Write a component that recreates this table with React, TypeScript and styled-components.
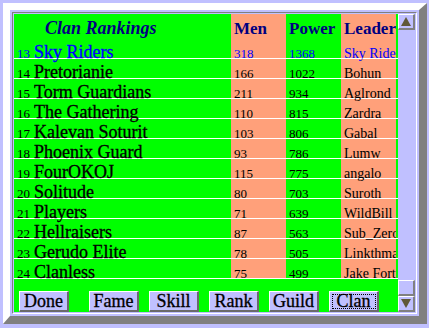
import styled, { createGlobalStyle } from 'styled-components';

const COLORS = {
	lavender: '#c0c0ff',
	shadow: '#808080',
	light: '#ffffff',
	green: '#00ff00',
	salmon: '#ffa07a',
	navy: '#000080',
	selected: '#0000ff',
	arrow: '#605838',
};

type Tone = 'green' | 'salmon';

interface IClan {
	rank: number;
	name: string;
	men: number;
	power: number;
	leader: string;
}

const CLANS: IClan[] = [
	{ rank: 13, name: 'Sky Riders', men: 318, power: 1368, leader: 'Sky Rider' },
	{ rank: 14, name: 'Pretorianie', men: 166, power: 1022, leader: 'Bohun' },
	{ rank: 15, name: 'Torm Guardians', men: 211, power: 934, leader: 'Aglrond' },
	{ rank: 16, name: 'The Gathering', men: 110, power: 815, leader: 'Zardra' },
	{ rank: 17, name: 'Kalevan Soturit', men: 103, power: 806, leader: 'Gabal' },
	{ rank: 18, name: 'Phoenix Guard', men: 93, power: 786, leader: 'Lumw' },
	{ rank: 19, name: 'FourOKOJ', men: 115, power: 775, leader: 'angalo' },
	{ rank: 20, name: 'Solitude', men: 80, power: 703, leader: 'Suroth' },
	{ rank: 21, name: 'Players', men: 71, power: 639, leader: 'WildBill' },
	{ rank: 22, name: 'Hellraisers', men: 87, power: 563, leader: 'Sub_Zero' },
	{ rank: 23, name: 'Gerudo Elite', men: 78, power: 505, leader: 'Linkthmaster' },
	{ rank: 24, name: 'Clanless', men: 75, power: 499, leader: 'Jake Fortune' },
];

const BUTTONS = ['Done', 'Fame', 'Skill', 'Rank', 'Guild', 'Clan'];

const App = () => {
	return (
		<>
			<GlobalStyle />
			<Frame>
				<Inset>
					<Board>
						<Row $head>
							<Cell $tone="green" $head $indent={31}>
								<Title>Clan Rankings</Title>
							</Cell>
							<Cell $tone="salmon" $head>
								<Heading>Men</Heading>
							</Cell>
							<Cell $tone="green" $head>
								<Heading>Power</Heading>
							</Cell>
							<Cell $tone="salmon" $head>
								<Heading>Leader</Heading>
							</Cell>
						</Row>
						{CLANS.map((clan, i) => (
							<Row key={clan.rank} $selected={i === 0}>
								<Cell $tone="green">
									<Rank>{clan.rank}</Rank>
									<Name>{clan.name}</Name>
								</Cell>
								<Cell $tone="salmon">
									<Stat>{clan.men}</Stat>
								</Cell>
								<Cell $tone="green">
									<Stat>{clan.power}</Stat>
								</Cell>
								<Cell $tone="salmon" $clip>
									<Leader>{clan.leader}</Leader>
								</Cell>
							</Row>
						))}
						<ButtonBar>
							{BUTTONS.map((label, i) => (
								<Button key={label} $spaced={i === 0} $focused={label === 'Clan'}>
									{label}
								</Button>
							))}
						</ButtonBar>
					</Board>
					<ScrollBar>
						<ScrollButton>
							<svg width="10" height="9" viewBox="0 0 10 9">
								<polygon points="5,0 10,9 0,9" fill={COLORS.arrow} />
							</svg>
						</ScrollButton>
						<Track />
						<Thumb />
						<ScrollButton>
							<svg width="10" height="9" viewBox="0 0 10 9">
								<polygon points="0,0 10,0 5,9" fill={COLORS.arrow} />
							</svg>
						</ScrollButton>
					</ScrollBar>
				</Inset>
			</Frame>
		</>
	);
};

const GlobalStyle = createGlobalStyle`
	html, body {
		margin: 0;
		padding: 0;
		background: ${COLORS.lavender};
	}
	body {
		width: 429px;
		height: 328px;
		overflow: hidden;
		font-family: 'Liberation Serif', 'Times New Roman', serif;
	}
`;

const Frame = styled.div`
	box-sizing: border-box;
	width: 424px;
	height: 321px;
	margin: 3px 0 0 3px;
	padding: 2px;
	border-style: solid;
	border-width: 7px 8px 8px 7px;
	border-color: ${COLORS.light} ${COLORS.shadow} ${COLORS.shadow} ${COLORS.light};
	background: ${COLORS.lavender};
`;

const Inset = styled.div`
	box-sizing: border-box;
	height: 100%;
	padding: 1px;
	border: 1px solid;
	border-color: ${COLORS.shadow} ${COLORS.light} ${COLORS.light} ${COLORS.shadow};
	display: flex;
`;

const Board = styled.div`
	width: 384px;
	background: ${COLORS.green};
	display: flex;
	flex-direction: column;
`;

const Row = styled.div<{ $head?: boolean; $selected?: boolean }>`
	display: grid;
	grid-template-columns: 217px 55px 55px 55px;
	height: ${({ $head }) => ($head ? '25px' : '19px')};
	border-bottom: ${({ $head }) => ($head ? 'none' : `1px solid ${COLORS.light}`)};
	color: ${({ $selected }) => ($selected ? COLORS.selected : '#000')};
`;

const Cell = styled.div<{ $tone: Tone; $head?: boolean; $indent?: number; $clip?: boolean }>`
	background: ${({ $tone }) => ($tone === 'green' ? COLORS.green : COLORS.salmon)};
	padding: ${({ $head }) => ($head ? '14px' : '13px')} 0 0 ${({ $indent }) => $indent ?? 3}px;
	font-size: 18px;
	line-height: 0;
	white-space: nowrap;
	overflow-x: ${({ $clip }) => ($clip ? 'clip' : 'visible')};
	overflow-y: visible;
`;

const Title = styled.span`
	position: relative;
	font-size: 18px;
	font-weight: bold;
	font-style: italic;
	color: ${COLORS.navy};
`;

const Heading = styled.span`
	position: relative;
	font-size: 17px;
	font-weight: bold;
	color: ${COLORS.navy};
`;

const Rank = styled.span`
	position: relative;
	font-size: 13px;
	margin-right: 4px;
`;

const Name = styled.span`
	position: relative;
	font-size: 18px;
	-webkit-text-stroke: 0.3px currentColor;
`;

const Stat = styled.span`
	position: relative;
	font-size: 13px;
`;

const Leader = styled.span`
	position: relative;
	font-size: 14px;
`;

const ButtonBar = styled.div`
	flex: 1;
	display: flex;
	align-items: flex-start;
	gap: 10px;
	padding: 12px 0 0 5px;
`;

const Button = styled.button<{ $spaced?: boolean; $focused?: boolean }>`
	box-sizing: border-box;
	width: 50px;
	height: 21px;
	padding: 0;
	margin-right: ${({ $spaced }) => ($spaced ? '10px' : '0')};
	font-family: 'Liberation Serif', 'Times New Roman', serif;
	font-size: 18px;
	line-height: 18px;
	color: #000;
	-webkit-text-stroke: 0.3px #000;
	background: ${COLORS.lavender};
	border-style: solid;
	border-width: 1px 2px 2px 1px;
	border-color: ${COLORS.light} #6a6a6a #6a6a6a ${COLORS.light};
	outline: ${({ $focused }) => ($focused ? '1px dotted #000' : 'none')};
	outline-offset: -4px;
`;

const ScrollBar = styled.div`
	width: 17px;
	display: flex;
	flex-direction: column;
	background: ${COLORS.lavender};
`;

const ScrollButton = styled.div`
	box-sizing: border-box;
	height: 16px;
	display: flex;
	align-items: center;
	justify-content: center;
	border-style: solid;
	border-width: 1px 2px 2px 1px;
	border-color: ${COLORS.light} ${COLORS.shadow} ${COLORS.shadow} ${COLORS.light};
`;

const Track = styled.div`
	flex: 1;
`;

const Thumb = styled.div`
	box-sizing: border-box;
	height: 16px;
	border-style: solid;
	border-width: 1px 2px 2px 1px;
	border-color: ${COLORS.light} ${COLORS.shadow} ${COLORS.shadow} ${COLORS.light};
`;

export default App;
